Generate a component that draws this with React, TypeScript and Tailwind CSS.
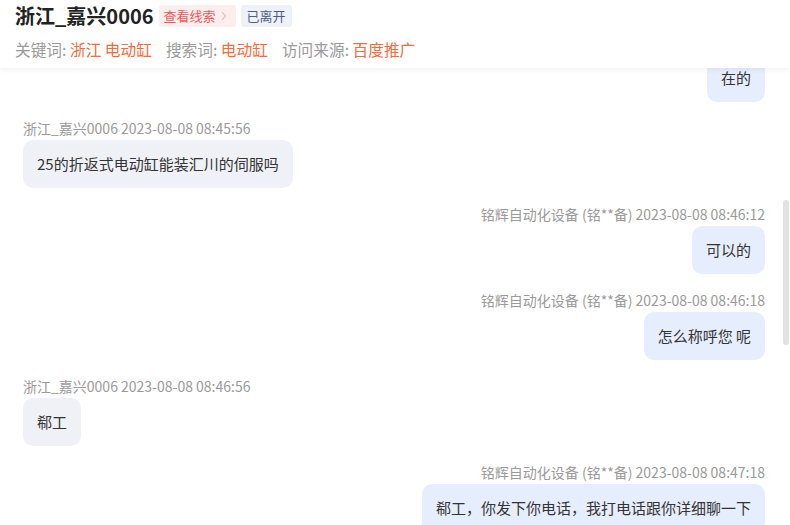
import { ChevronRight } from "lucide-react";

type Msg = {
  side: "left" | "right";
  meta?: string;
  text: string;
};

const messages: Msg[] = [
  { side: "right", text: "在的" },
  { side: "left", meta: "浙江_嘉兴0006 2023-08-08 08:45:56", text: "25的折返式电动缸能装汇川的伺服吗" },
  { side: "right", meta: "铭辉自动化设备 (铭**备) 2023-08-08 08:46:12", text: "可以的" },
  { side: "right", meta: "铭辉自动化设备 (铭**备) 2023-08-08 08:46:18", text: "怎么称呼您 呢" },
  { side: "left", meta: "浙江_嘉兴0006 2023-08-08 08:46:56", text: "郗工" },
  {
    side: "right",
    meta: "铭辉自动化设备 (铭**备) 2023-08-08 08:47:18",
    text: "郗工，你发下你电话，我打电话跟你详细聊一下",
  },
];

const font = { fontFamily: '"Noto Sans CJK SC", "Noto Sans", sans-serif' };

export default function App() {
  return (
    <div className="h-[525px] w-[790px] overflow-hidden bg-white flex flex-col" style={font}>
      {/* Header */}
      <div className="relative z-10 h-[68px] shrink-0 bg-white px-[15px] pt-[4px] shadow-[0_2px_5px_rgba(0,0,0,0.06)]">
        <div className="flex h-[24px] items-center gap-[5px]">
          <h1 className="text-[20px] font-bold leading-6 text-[#222]">浙江_嘉兴0006</h1>
          <span className="flex h-[22px] items-center gap-[1px] rounded-[3px] bg-[#fdeeee] px-[5px] text-[13px] text-[#f0585a]">
            查看线索
            <ChevronRight className="h-3.5 w-3.5 text-[#f4a3a3]" strokeWidth={1.75} />
          </span>
          <span className="flex h-[22px] items-center rounded-[3px] bg-[#eef1f8] px-[6px] text-[13px] text-[#4d5b85]">
            已离开
          </span>
        </div>
        <div className="mt-[12px] flex gap-[14px] text-[15.7px] leading-5">
          <span className="text-[#9a9a9a]">
            关键词: <span className="text-[#f26c3c]">浙江 电动缸</span>
          </span>
          <span className="text-[#9a9a9a]">
            搜索词: <span className="text-[#f26c3c]">电动缸</span>
          </span>
          <span className="text-[#9a9a9a]">
            访问来源: <span className="text-[#f26c3c]">百度推广</span>
          </span>
        </div>
      </div>

      {/* Chat */}
      <div className="relative flex-1 overflow-hidden">
        <div className="-mt-[14px] flex flex-col gap-4 pl-[23px] pr-[25px]">
          {messages.map((m, i) => (
            <div
              key={i}
              className={`flex flex-col ${m.side === "right" ? "items-end" : "items-start"}`}
            >
              {m.meta && (
                <div className="mb-0.5 text-[14px] leading-5 text-[#9a9a9a]">{m.meta}</div>
              )}
              <div
                className={`rounded-[10px] px-3.5 py-3.5 text-[15px] leading-5 text-[#333] ${
                  m.side === "right" ? "bg-[#e6eefd]" : "bg-[#eff1f6]"
                }`}
              >
                {m.text}
              </div>
            </div>
          ))}
        </div>
        {/* scrollbar thumb */}
        <div className="absolute right-[1px] top-[132px] h-[145px] w-[6px] rounded-full bg-[#e2e2e2]" />
      </div>
    </div>
  );
}
